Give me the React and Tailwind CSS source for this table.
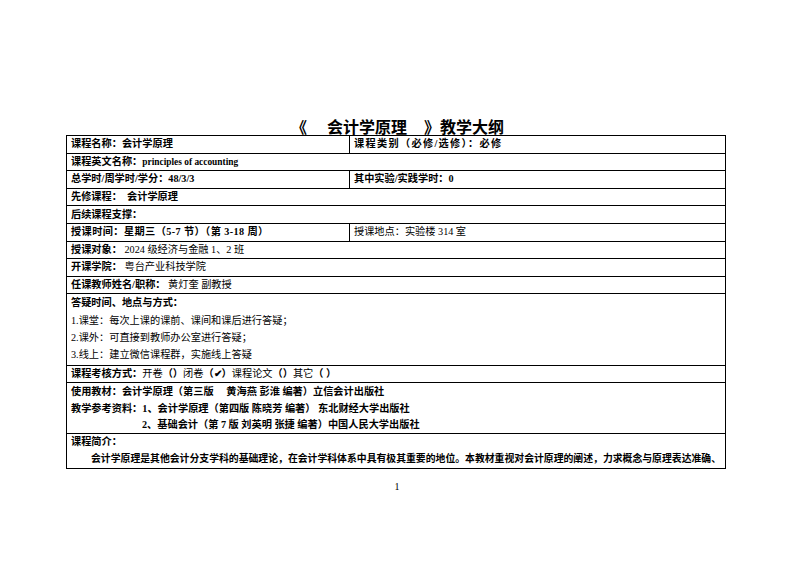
const serif = "font-['Liberation_Serif','Noto_Sans_CJK_SC',serif]";

function Row({ children, h = "h-[17.6px]", last = false }) {
  return (
    <div className={`flex items-center ${h} ${last ? "" : "border-b border-black"}`}>
      {children}
    </div>
  );
}

function Cell({ children, className = "" }) {
  return <div className={`px-[4px] whitespace-nowrap ${className}`}>{children}</div>;
}

function Line({ children, className = "", h = "h-[17.3px]" }) {
  return <div className={`${h} flex items-center px-[4px] whitespace-nowrap ${className}`}>{children}</div>;
}

export default function App() {
  return (
    <div className={`w-[793px] h-[561px] bg-white text-black ${serif} text-[10.2px] leading-none`}>
      <div className="pt-[120px] pl-[291px] flex">
        <h1 className="text-[16px] font-bold leading-[15px] whitespace-nowrap">
          《<span className="ml-[20px]">会计学原理</span>
          <span className="ml-[17px]">》</span>教学大纲
        </h1>
      </div>

      <div className="ml-[66px] w-[660px] border border-black">
        <Row>
          <Cell className="w-[283px] h-full flex items-center border-r border-black font-bold">课程名称：会计学原理</Cell>
          <Cell className="font-bold tracking-[1.3px]">课程类别（必修/选修）：必修</Cell>
        </Row>
        <Row>
          <Cell className="font-bold">
            课程英文名称：<span className="text-[9.4px]">principles of accounting</span>
          </Cell>
        </Row>
        <Row>
          <Cell className="w-[283px] h-full flex items-center border-r border-black font-bold">总学时/周学时/学分：48/3/3</Cell>
          <Cell className="font-bold">其中实验/实践学时：0</Cell>
        </Row>
        <Row>
          <Cell className="font-bold">先修课程：&nbsp;&nbsp;会计学原理</Cell>
        </Row>
        <Row>
          <Cell className="font-bold">后续课程支撑：</Cell>
        </Row>
        <Row>
          <Cell className="w-[283px] h-full flex items-center border-r border-black font-bold tracking-[0.4px]">授课时间：星期三（5-7 节）（第 3-18 周）</Cell>
          <Cell>授课地点：实验楼 314 室</Cell>
        </Row>
        <Row>
          <Cell>
            <span className="font-bold">授课对象：</span>&nbsp;2024 级经济与金融 1、2 班
          </Cell>
        </Row>
        <Row>
          <Cell>
            <span className="font-bold">开课学院：</span>&nbsp;粤台产业科技学院
          </Cell>
        </Row>
        <Row>
          <Cell>
            <span className="font-bold">任课教师姓名/职称：</span>&nbsp;黄灯奎 副教授
          </Cell>
        </Row>

        <div className="border-b border-black py-[0.5px]">
          <Line className="font-bold">答疑时间、地点与方式：</Line>
          <Line>1.课堂：每次上课的课前、课间和课后进行答疑；</Line>
          <Line>2.课外：可直接到教师办公室进行答疑；</Line>
          <Line>3.线上：建立微信课程群，实施线上答疑</Line>
        </div>

        <Row>
          <Cell>
            <span className="font-bold">课程考核方式：</span>开卷<span className="font-bold">（）</span>闭卷
            <span className="font-bold">（✔）</span>课程论文<span className="font-bold">（）</span>其它
            <span className="font-bold">（ ）</span>
          </Cell>
        </Row>

        <div className="border-b border-black font-bold">
          <Line h="h-[17px]">使用教材：会计学原理（第三版&nbsp;&nbsp;&nbsp;&nbsp;&nbsp;黄海燕 彭淮 编著）立信会计出版社</Line>
          <Line h="h-[17px]">教学参考资料：1、会计学原理（第四版 陈晓芳 编著）&nbsp;东北财经大学出版社</Line>
          <Line h="h-[16px]" className="pl-[75px]">2、基础会计（第 7 版 刘英明 张捷 编著）中国人民大学出版社</Line>
        </div>

        <div className="font-bold">
          <Line h="h-[16px]">课程简介：</Line>
          <Line h="h-[18px]" className="pl-[24px] text-[9.85px]">
            会计学原理是其他会计分支学科的基础理论，在会计学科体系中具有极其重要的地位。本教材重视对会计原理的阐述，力求概念与原理表达准确、
          </Line>
        </div>
      </div>

      <div className="mt-[13px] text-center text-[10px] pl-[1px]">1</div>
    </div>
  );
}
